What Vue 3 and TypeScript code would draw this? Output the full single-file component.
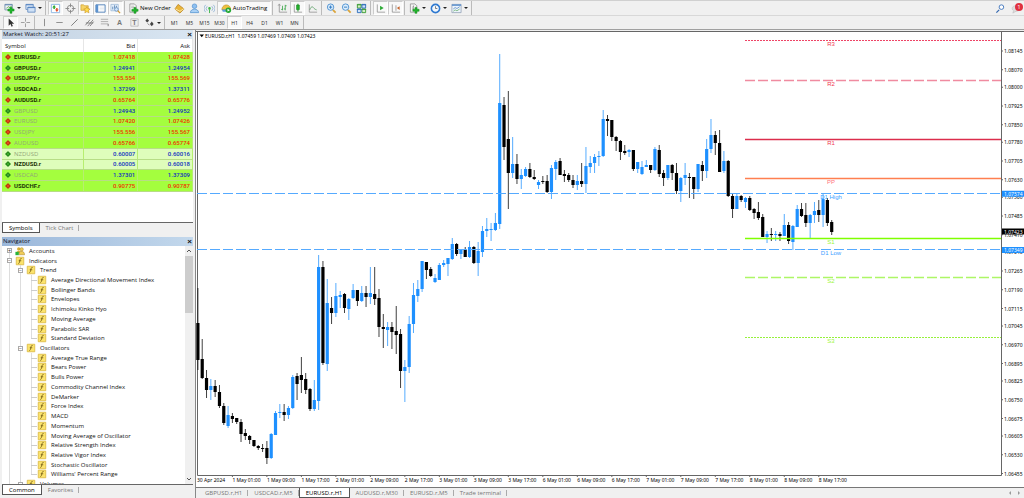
<script setup lang="ts">
import { ref } from 'vue'

interface Shape { d: string; f?: string; s?: string; w?: number }
interface Tool { icon?: string; label: string; text?: string; drop?: boolean; on?: boolean }
type Candle = [high: number, top: number, bottom: number, low: number, up: 0 | 1]

const icons: Record<string, Shape[]> = {
  newChart: [
    { d: 'M1 1.5h8v6H1z', f: '#eef4fa', s: '#7d95ad' }, { d: 'M1 2h8', s: '#5f86b3' },
    { d: 'M2.5 6l2-2 2 1 2-2', s: '#6aa84f' },
    { d: 'M6.5 4.5h2.2v2h2.3v2.3H8.7v2.4H6.5V8.8H4.2V6.5h2.3z', f: '#1fb52c', s: '#128a1d', w: 0.5 },
  ],
  profiles: [
    { d: 'M1 1.5h8v5.5H1z', f: '#e3eefb', s: '#6c93c4' }, { d: 'M1 2h8', s: '#4d7fc0' },
    { d: 'M3 4.5h8V10H3z', f: '#cfe1f6', s: '#6c93c4' }, { d: 'M3 5h8', s: '#4d7fc0' },
  ],
  watch: [
    { d: 'M1.5 1.5h9v9h-9z', f: '#fff', s: '#8bb6e2' },
    { d: 'M4.5 2.2L6.5 5H5.3v1.5H3.7V5H2.5z', f: '#2ea82f' },
    { d: 'M7.5 9.8L5.5 7h1.2V5.5h1.6V7h1.2z', f: '#e2502a' },
  ],
  target: [
    { d: 'M6 2.5a3.5 3.5 0 1 1 0 7a3.5 3.5 0 1 1 0-7z', s: '#888' },
    { d: 'M6 0.5v4M6 7.5v4M0.5 6h4M7.5 6h4', s: '#888' },
  ],
  navigator: [
    { d: 'M1 2h3l1 1h4v5H1z', f: '#f6d365', s: '#c99a2c', w: 0.7 },
    { d: 'M7.5 4l1.1 2.2 2.4.3-1.7 1.7.4 2.5-2.2-1.2-2.2 1.2.4-2.5L4 6.5l2.4-.3z', f: '#ffdb4d', s: '#c78d17', w: 0.6 },
  ],
  terminal: [
    { d: 'M1 2h10v8H1z', f: '#fff', s: '#4d7fb8' }, { d: 'M1 2h2.5v8H1z', f: '#5c92cf' },
    { d: 'M5 4.5h5M5 6h5M5 7.5h5', s: '#d3dce6', w: 0.6 },
  ],
  tester: [
    { d: 'M1 1.5h8v7H1z', f: '#e4eefa', s: '#8badd0', w: 0.7 }, { d: 'M3 7V4M5 6V2.5M7 5V3', s: '#5c87b7' },
    { d: 'M7 5a2 2 0 1 1 0 4a2 2 0 1 1 0-4z', f: '#d2e7fb', s: '#5b87bb', w: 0.8 }, { d: 'M8.5 8.5l2.5 2.5', s: '#d49a32', w: 1.4 },
  ],
  order: [
    { d: 'M2 1h5l2 2v7H2z', f: '#f6f6f6', s: '#888', w: 0.8 }, { d: 'M3.5 3.5h3M3.5 5h4', s: '#999', w: 0.6 },
    { d: 'M6.5 4.8h2.2v2H11V9H8.7v2.3H6.5V9H4.2V6.8h2.3z', f: '#21b32c', s: '#118a1b', w: 0.5 },
  ],
  gold: [{ d: 'M4.5 1.5l6.5 5-4.5 4.5L1 6.5z', f: '#e9b43a', s: '#b77d16', w: 0.8 }, { d: 'M1.5 6.5l5 2.5L11 6', s: '#fff0b5', w: 0.9 }],
  person: [
    { d: 'M6 1a2.3 2.3 0 1 1 0 5a2.3 2.3 0 1 1 0-5z', f: '#8fc0f0', s: '#4e8fce', w: 0.7 },
    { d: 'M1.5 10.5c0-5 9-5 9 0z', f: '#a9d0f5', s: '#4e8fce', w: 0.8 },
  ],
  signal: [
    { d: 'M6 4.5a1.4 1.4 0 1 1 0 2.8a1.4 1.4 0 1 1 0-2.8z', f: '#3fb44a' }, { d: 'M6 7v4', s: '#3fb44a' },
    { d: 'M3.5 3.5a3.5 3.5 0 0 0 0 5M8.5 3.5a3.5 3.5 0 0 1 0 5M1.8 2a6 6 0 0 0 0 8M10.2 2a6 6 0 0 1 0 8', s: '#7fa9d1', w: 0.8 },
  ],
  auto: [
    { d: 'M1 7.5c0-7 9-7 9.5-1z', f: '#eec23f', s: '#b88a1d', w: 0.7 }, { d: 'M1 7h8v2.5H2z', f: '#5d9ed8' },
    { d: 'M8 4.8a3 3 0 1 1 0 6a3 3 0 1 1 0-6z', f: '#24a832' }, { d: 'M7.1 6.3l2.5 1.5-2.5 1.5z', f: '#fff' },
  ],
  bars: [
    { d: 'M2.5 1.5V10H11', s: '#888', w: 0.8 }, { d: 'M1.2 3l1.3-2 1.3 2', s: '#888', w: 0.7 },
    { d: 'M6 3v5M6 7H4.5M9 2v6M9 3h1.5M9 6.5H7.5', s: '#3da64a', w: 0.9 },
  ],
  candles: [{ d: 'M2.5 1.5V10H11', s: '#888', w: 0.8 }, { d: 'M6.5 0.8v8.5', s: '#188c22' }, { d: 'M5 2.2h3v5H5z', f: '#24b12c', s: '#188c22', w: 0.7 }],
  line: [{ d: 'M2.5 1.5V10H11', s: '#888', w: 0.8 }, { d: 'M3 7.5C4 4 6 3.5 7 5s2 2 3.5 2.5', s: '#5a9e63', w: 0.9 }],
  zoomIn: [
    { d: 'M7.5 7.5l3 3', s: '#dba53c', w: 2 }, { d: 'M5 1a3.5 3.5 0 1 1 0 7a3.5 3.5 0 1 1 0-7z', f: '#dceefd', s: '#4b8fd0' },
    { d: 'M3.2 4.5h3.6M5 2.7v3.6', s: '#2e77c0' },
  ],
  zoomOut: [
    { d: 'M7.5 7.5l3 3', s: '#dba53c', w: 2 }, { d: 'M5 1a3.5 3.5 0 1 1 0 7a3.5 3.5 0 1 1 0-7z', f: '#dceefd', s: '#4b8fd0' },
    { d: 'M3.2 4.5h3.6', s: '#2e77c0' },
  ],
  tiles: [
    { d: 'M1.5 1.5h4v4h-4zM6.5 6.5h4v4h-4z', f: '#d5edc9', s: '#3c9c34' }, { d: 'M6.5 1.5h4v4h-4zM1.5 6.5h4v4h-4z', f: '#cfe2f8', s: '#2f6fba' },
    { d: 'M1 2h5M6 7h5', s: '#3c9c34' }, { d: 'M6 2h5M1 7h5', s: '#2f6fba' },
  ],
  scroll: [{ d: 'M2.5 1.5V10H11', s: '#888', w: 0.8 }, { d: 'M5.5 3l4 2.5-4 2.5z', f: '#2caa36' }],
  shift: [{ d: 'M2.5 1.5V10H11M6.5 2.5v6', s: '#888', w: 0.8 }, { d: 'M10.5 3.5L7.5 5.5l3 2z', f: '#c4632c' }],
  indicators: [
    { d: 'M1.5 1h5l2 2v7h-7z', f: '#f5f5f5', s: '#888', w: 0.8 }, { d: 'M5.5 3c-1 0-1 1-1 4', s: '#555', w: 0.8 },
    { d: 'M6.5 4.8h2.2v2H11V9H8.7v2.3H6.5V9H4.2V6.8h2.3z', f: '#21b32c', s: '#118a1b', w: 0.5 },
  ],
  clock: [{ d: 'M6 1.5a4.5 4.5 0 1 1 0 9a4.5 4.5 0 1 1 0-9z', f: '#f2f8fe', s: '#2f79d0', w: 1.7 }, { d: 'M6 3.5V6h2', s: '#555', w: 0.8 }],
  template: [
    { d: 'M1 1.5h10v9H1z', f: '#edf4fb', s: '#8a9bb0', w: 0.8 }, { d: 'M1 2.3h10', s: '#5b8fcd', w: 1.6 },
    { d: 'M2.5 6.5l2-1.5 2 1 3-2', s: '#4c80bd', w: 0.8 }, { d: 'M2.5 9l2-1.5 2 1 3-2', s: '#62a864', w: 0.8 },
  ],
  cursor: [{ d: 'M4 1.5v8l2-1.8 1.2 2.8 1.4-.6-1.2-2.6H10z', f: '#333' }],
  cross: [{ d: 'M6 1v4M6 7v4M1 6h4M7 6h4', s: '#999' }],
  vline: [{ d: 'M6 2v8', s: '#888' }],
  hline: [{ d: 'M2.5 6h7', s: '#888' }],
  trend: [{ d: 'M2.5 9.5l7-7', s: '#777' }],
  channel: [{ d: 'M1.5 9l5-6M4 10l6-7M6.5 10l4-5M2 6.5h8', s: '#666', w: 0.8 }],
  fibo: [{ d: 'M2 2.5h8M2 5h8M2 7.5h8', s: '#999', w: 0.8 }, { d: 'M10 7.5V10', s: '#777' }],
  frame: [{ d: 'M2 2h8v8H2z', s: '#aaa', w: 0.7 }],
  arrows: [{ d: 'M3.5 1.5l2 2.5-2 2-2-2zM8.5 5l2 2.5-2 2.5-2-2.5z', f: '#444' }, { d: 'M4 7l2 2', s: '#777' }],
  search: [{ d: 'M4.5 7.5l-3 3', s: '#3468b0', w: 1.4 }, { d: 'M7 2a2.5 2.5 0 1 1 0 5a2.5 2.5 0 1 1 0-5z', f: '#fff', s: '#3d73bb' }],
  bubble: [{ d: 'M5.5 3c6 0 6 6 0 6L2 11l.8-2.5C0 6.5 1 3 5.5 3z', f: '#ddd', s: '#bbb', w: 0.6 }],
  fx: [{ d: 'M1.5 1.5h9v9h-9z', f: '#fbe36c', s: '#dcb944' }, { d: 'M8 3c-2 0-2 1-2.3 3S5 9 4 9M4.5 5.7h3', s: '#6b5510', w: 0.9 }],
  accounts: [
    { d: 'M4.5 1.5a2 2 0 1 1 0 4a2 2 0 1 1 0-4zM1.5 9c0-4.5 6-4.5 6 0z', f: '#d8ae35' },
    { d: 'M8 2a2 2 0 1 1 0 4a2 2 0 1 1 0-4zM4.5 10.5c0-5.5 7-5.5 7 0z', f: '#f0cc58', s: '#a98221', w: 0.6 },
    { d: 'M0.5 7h4v4h-4z', f: '#27b43a' },
  ],
}

const standard: Tool[][] = [
  [{ icon: 'newChart', label: 'New chart', drop: true }, { icon: 'profiles', label: 'Profiles', drop: true }],
  [
    { icon: 'watch', label: 'Market Watch', on: true }, { icon: 'target', label: 'Data Window' },
    { icon: 'navigator', label: 'Navigator', on: true }, { icon: 'terminal', label: 'Terminal', on: true },
    { icon: 'tester', label: 'Strategy Tester', on: true },
  ],
  [
    { icon: 'order', label: 'New Order', text: 'New Order' }, { icon: 'gold', label: 'MetaEditor' },
    { icon: 'person', label: 'Community' }, { icon: 'signal', label: 'Signals' },
    { icon: 'auto', label: 'AutoTrading', text: 'AutoTrading', on: true },
  ],
  [{ icon: 'bars', label: 'Bar chart' }, { icon: 'candles', label: 'Candlesticks', on: true }, { icon: 'line', label: 'Line chart' }],
  [{ icon: 'zoomIn', label: 'Zoom in' }, { icon: 'zoomOut', label: 'Zoom out' }, { icon: 'tiles', label: 'Tile windows' }],
  [{ icon: 'scroll', label: 'Auto scroll', on: true }, { icon: 'shift', label: 'Chart shift', on: true }],
  [
    { icon: 'indicators', label: 'Indicators', drop: true }, { icon: 'clock', label: 'Periods', drop: true },
    { icon: 'template', label: 'Templates', drop: true },
  ],
]
const drawing: Tool[][] = [
  [{ icon: 'cursor', label: 'Cursor', on: true }, { icon: 'cross', label: 'Crosshair' }],
  [
    { icon: 'vline', label: 'Vertical line' }, { icon: 'hline', label: 'Horizontal line' }, { icon: 'trend', label: 'Trendline' },
    { icon: 'channel', label: 'Channel' }, { icon: 'fibo', label: 'Fibonacci' }, { label: 'Text', text: 'A' },
    { icon: 'frame', label: 'Text label', text: 'T' }, { icon: 'arrows', label: 'Arrows', drop: true },
  ],
]
const periods = ['M1', 'M5', 'M15', 'M30', 'H1', 'H4', 'D1', 'W1', 'MN']
const period = ref('H1')

interface Quote { s: string; bid: string; ask: string; up: boolean; off?: boolean; pale?: boolean }
const quotes: Quote[] = [
  { s: 'EURUSD.r', bid: '1.07418', ask: '1.07428', up: false },
  { s: 'GBPUSD.r', bid: '1.24941', ask: '1.24954', up: true },
  { s: 'USDJPY.r', bid: '155.554', ask: '155.569', up: false },
  { s: 'USDCAD.r', bid: '1.37299', ask: '1.37311', up: true },
  { s: 'AUDUSD.r', bid: '0.65764', ask: '0.65776', up: false },
  { s: 'GBPUSD', bid: '1.24943', ask: '1.24952', up: true, off: true },
  { s: 'EURUSD', bid: '1.07420', ask: '1.07426', up: false, off: true },
  { s: 'USDJPY', bid: '155.556', ask: '155.567', up: false, off: true },
  { s: 'AUDUSD', bid: '0.65766', ask: '0.65774', up: false, off: true },
  { s: 'NZDUSD', bid: '0.60007', ask: '0.60016', up: true, off: true, pale: true },
  { s: 'NZDUSD.r', bid: '0.60005', ask: '0.60018', up: true, pale: true },
  { s: 'USDCAD', bid: '1.37301', ask: '1.37309', up: true, off: true },
  { s: 'USDCHF.r', bid: '0.90775', ask: '0.90787', up: false },
]

interface Node { t: string; lvl: number; sign?: string; last?: boolean }
const leaves = (names: string[]): Node[] => names.map((t, i) => ({ t, lvl: 2, last: i === names.length - 1 }))
const tree: Node[] = [
  { t: 'Accounts', lvl: 0, sign: '+' },
  { t: 'Indicators', lvl: 0, sign: '−' },
  { t: 'Trend', lvl: 1, sign: '−' },
  ...leaves(['Average Directional Movement Index', 'Bollinger Bands', 'Envelopes', 'Ichimoku Kinko Hyo', 'Moving Average', 'Parabolic SAR', 'Standard Deviation']),
  { t: 'Oscillators', lvl: 1, sign: '−' },
  ...leaves(['Average True Range', 'Bears Power', 'Bulls Power', 'Commodity Channel Index', 'DeMarker', 'Force Index', 'MACD', 'Momentum',
    'Moving Average of Oscillator', 'Relative Strength Index', 'Relative Vigor Index', 'Stochastic Oscillator', "Williams' Percent Range"]),
  { t: 'Volumes', lvl: 1, sign: '−' },
]

const chartTabs = ['GBPUSD.r,H1', 'USDCAD.r,M5', 'EURUSD.r,H1', 'AUDUSD.r,M30', 'EURUSD.r,M5', 'Trade terminal']
const chartTab = ref('EURUSD.r,H1')

// Plot units: one unit is four points of price, one hour is 4.3116 units wide.
const yOf = (price: number) => 20 + (1.08145 - price) / 0.00004
const xOf = (hour: number) => 1.9 + hour * 4.3116
const plotRight = 805
const plotBottom = 444

const candles: Candle[] = [
  [288, 323, 360, 370, 0], [339, 359, 378, 379, 0], [370, 378, 390, 398, 0], [379, 386, 390, 400, 1], [380, 386, 392, 397, 0],
  [385, 392, 406, 408, 0], [403, 406, 423, 425, 0], [406, 415, 426, 428, 1], [413, 416, 419, 423, 0], [418, 418, 422, 424, 0],
  [419, 422, 434, 442, 0], [429, 433, 436, 440, 0], [435, 436, 440, 444, 0], [440, 440, 446, 447, 0], [445, 446, 448, 450, 0],
  [444, 448, 449, 452, 0], [441, 448, 458, 464, 0], [433, 434, 458, 459, 1], [411, 413, 435, 435, 1], [404, 412, 413, 418, 1],
  [404, 412, 415, 421, 0], [406, 408, 415, 419, 1], [375, 377, 408, 409, 1], [373, 376, 384, 400, 0], [357, 375, 380, 393, 0],
  [373, 379, 390, 394, 0], [388, 389, 409, 411, 0], [380, 400, 409, 411, 1], [255, 267, 401, 410, 1], [261, 267, 363, 365, 0],
  [279, 303, 364, 371, 1], [297, 308, 313, 324, 0], [283, 296, 313, 317, 1], [291, 295, 297, 308, 1], [293, 294, 308, 313, 0],
  [298, 299, 309, 320, 1], [284, 290, 298, 299, 1], [290, 290, 301, 306, 0], [286, 293, 301, 302, 1], [286, 293, 297, 307, 0],
  [267, 293, 297, 304, 1], [267, 294, 299, 305, 0], [289, 298, 327, 337, 0], [314, 327, 329, 348, 0], [322, 327, 330, 346, 1],
  [322, 327, 332, 349, 0], [306, 331, 335, 354, 0], [329, 334, 371, 388, 0], [360, 367, 371, 402, 1], [316, 324, 367, 373, 1],
  [283, 295, 324, 333, 1], [280, 289, 296, 302, 1], [261, 261, 289, 292, 1], [262, 262, 270, 279, 0], [267, 269, 276, 277, 0],
  [274, 278, 282, 283, 1], [263, 265, 280, 280, 1], [260, 263, 265, 267, 1], [258, 258, 264, 276, 1], [238, 244, 259, 260, 1],
  [243, 244, 254, 256, 0], [249, 250, 254, 259, 1], [247, 250, 257, 257, 0], [241, 247, 257, 258, 1], [246, 247, 263, 264, 0],
  [242, 251, 263, 276, 1], [226, 231, 252, 257, 1], [218, 229, 231, 237, 1], [223, 229, 230, 241, 1], [213, 223, 230, 231, 1],
  [54, 103, 224, 229, 1], [97, 105, 147, 160, 0], [91, 139, 173, 209, 0], [137, 164, 173, 178, 1], [154, 164, 179, 184, 0],
  [169, 175, 179, 189, 1], [167, 169, 176, 177, 1], [163, 169, 177, 178, 0], [170, 177, 179, 180, 0], [180, 182, 185, 189, 1],
  [176, 181, 182, 184, 0], [175, 181, 192, 193, 0], [165, 168, 192, 199, 1], [160, 162, 169, 180, 1], [158, 161, 175, 175, 0],
  [170, 174, 176, 182, 0], [173, 175, 180, 182, 0], [175, 180, 185, 188, 0], [175, 181, 185, 190, 1], [163, 181, 184, 187, 0],
  [147, 166, 184, 193, 1], [156, 163, 167, 173, 1], [154, 157, 163, 173, 1], [151, 156, 157, 166, 1], [110, 119, 156, 157, 1],
  [115, 119, 121, 136, 0], [120, 120, 137, 141, 0], [136, 137, 141, 151, 0], [140, 141, 152, 160, 0], [145, 151, 153, 155, 0],
  [149, 150, 152, 157, 1], [150, 150, 169, 171, 0], [162, 162, 169, 173, 1], [161, 167, 174, 175, 1], [160, 165, 167, 167, 1],
  [165, 165, 170, 173, 0], [147, 149, 170, 171, 1], [145, 150, 174, 177, 0], [170, 173, 178, 186, 0], [165, 165, 178, 180, 1],
  [164, 165, 173, 180, 0], [163, 173, 191, 194, 0], [177, 178, 191, 202, 1], [163, 175, 178, 185, 1], [173, 177, 178, 198, 0],
  [177, 177, 189, 199, 0], [164, 164, 189, 192, 1], [161, 165, 171, 181, 0], [139, 149, 171, 178, 1], [119, 135, 149, 153, 1],
  [131, 135, 143, 155, 0], [130, 143, 172, 172, 0], [151, 161, 171, 173, 1], [160, 161, 196, 197, 0], [194, 196, 209, 218, 0],
  [194, 196, 209, 209, 1], [195, 196, 200, 202, 0], [197, 198, 202, 208, 1], [196, 198, 210, 211, 0], [208, 209, 213, 219, 0],
  [202, 212, 218, 220, 0], [214, 217, 237, 237, 0], [231, 234, 237, 243, 1], [228, 234, 235, 241, 0], [231, 234, 235, 241, 1],
  [232, 234, 236, 241, 0], [214, 225, 236, 236, 1], [222, 225, 241, 244, 0], [225, 226, 242, 250, 1], [205, 209, 227, 227, 1],
  [203, 209, 216, 217, 0], [203, 215, 223, 227, 0], [214, 215, 223, 238, 1], [202, 211, 215, 223, 1], [200, 210, 215, 222, 0],
  [194, 199, 215, 227, 1], [198, 200, 223, 226, 0], [220, 222, 232, 235, 0],
]

const axisPrices = [1.08145, 1.0807, 1.08, 1.07925, 1.0785, 1.0778, 1.07705, 1.0763, 1.0756, 1.07485, 1.0741, 1.0734, 1.07265,
  1.0719, 1.07115, 1.07045, 1.0697, 1.06895, 1.06825, 1.0675, 1.06675, 1.06605, 1.0653, 1.06455]
const tags = [{ p: 1.07574, c: '#1e90ff' }, { p: 1.07423, c: '#000000' }, { p: 1.07349, c: '#1e90ff' }]
const levels = [
  { t: 'R3', p: 1.08186, c: '#ee4466', dash: '2 1', w: 1, x: 549 },
  { t: 'R2', p: 1.08029, c: '#f08ba0', dash: '10 3', w: 1.4, x: 549 },
  { t: 'R1', p: 1.07792, c: '#dc2d4c', dash: '', w: 1.4, x: 549 },
  { t: 'PP', p: 1.07636, c: '#ff7f50', dash: '', w: 1.4, x: 549 },
  { t: 'D1 High', p: 1.07574, c: '#55aaff', dash: '10 3', w: 1.2, x: 1 },
  { t: 'S1', p: 1.07395, c: '#7fff00', dash: '', w: 1.4, x: 549 },
  { t: 'D1 Low', p: 1.07349, c: '#55aaff', dash: '10 3', w: 1.2, x: 1 },
  { t: 'S2', p: 1.07239, c: '#adf666', dash: '10 3', w: 1.4, x: 549 },
  { t: 'S3', p: 1.06999, c: '#96f03c', dash: '2 1', w: 1, x: 549 },
]
const labelColor = (t: string) => (t[0] === 'D' ? '#3b9eff' : t[0] === 'S' ? '#9cf53a' : t === 'PP' ? '#ff6f7c' : '#f0384f')
const days = [1, 2, 3, 6, 7, 8]
const times = days.flatMap((d) => ['01', '09', '17'].map((h) => `${d} May ${h}:00`))
</script>

<template>
  <div class="terminal">
    <header class="toolbars">
      <div class="bar">
        <div v-for="(group, g) in standard" :key="g" class="group">
          <button v-for="t in group" :key="t.label" type="button" class="tool" :class="{ on: t.on, drop: t.drop, wide: t.text }" :aria-label="t.label">
            <svg v-if="t.icon" class="icon" viewBox="0 0 12 12"><path v-for="(s, i) in icons[t.icon]" :key="i" :d="s.d" :fill="s.f || 'none'" :stroke="s.s" :stroke-width="s.w || 1" /></svg>
            <span v-if="t.text">{{ t.text }}</span>
            <i v-if="t.drop" class="caret"></i>
          </button>
        </div>
        <div class="corner">
          <button type="button" class="tool" aria-label="Search">
            <svg class="icon" viewBox="0 0 12 12"><path v-for="(s, i) in icons.search" :key="i" :d="s.d" :fill="s.f || 'none'" :stroke="s.s" :stroke-width="s.w || 1" /></svg>
          </button>
          <button type="button" class="tool alerts" aria-label="Notifications">
            <svg class="icon" viewBox="0 0 12 12"><path v-for="(s, i) in icons.bubble" :key="i" :d="s.d" :fill="s.f || 'none'" :stroke="s.s" :stroke-width="s.w || 1" /></svg>
            <span class="badge">1</span>
          </button>
        </div>
      </div>
      <div class="bar second">
        <div v-for="(group, g) in drawing" :key="g" class="group">
          <button v-for="t in group" :key="t.label" type="button" class="tool" :class="{ on: t.on, drop: t.drop }" :aria-label="t.label">
            <svg v-if="t.icon" class="icon" viewBox="0 0 12 12"><path v-for="(s, i) in icons[t.icon]" :key="i" :d="s.d" :fill="s.f || 'none'" :stroke="s.s" :stroke-width="s.w || 1" /></svg>
            <span v-if="t.text" class="letter" :class="{ over: t.icon }">{{ t.text }}</span>
            <i v-if="t.drop" class="caret"></i>
          </button>
        </div>
        <div class="group">
          <button v-for="p in periods" :key="p" type="button" class="tool period" :class="{ on: p === period }" @click="period = p">{{ p }}</button>
        </div>
      </div>
    </header>

    <main class="body">
      <aside class="side">
        <section class="panel watch">
          <h2 class="title pale">Market Watch: 20:51:27<button type="button" class="close" aria-label="Close Market Watch">×</button></h2>
          <div class="sheet">
            <table class="quotes">
              <thead><tr><th scope="col">Symbol</th><th scope="col">Bid</th><th scope="col">Ask</th></tr></thead>
              <tbody>
                <tr v-for="q in quotes" :key="q.s" :class="{ up: q.up, off: q.off, faded: q.pale }">
                  <td><i class="gem"></i>{{ q.s }}</td><td>{{ q.bid }}</td><td>{{ q.ask }}</td>
                </tr>
              </tbody>
            </table>
          </div>
          <nav class="tabs"><button type="button" class="tab active">Symbols</button><button type="button" class="tab">Tick Chart</button></nav>
        </section>

        <section class="panel nav">
          <h2 class="title">Navigator<button type="button" class="close" aria-label="Close Navigator">×</button></h2>
          <div class="sheet tree-box">
            <ul class="tree">
              <li v-for="(n, i) in tree" :key="i" class="node">
                <i v-for="k in n.lvl" :key="k" class="guide line"></i>
                <i v-if="n.sign" class="guide line" :class="{ first: i === 0 }"><b class="sign">{{ n.sign }}</b></i>
                <i v-if="n.lvl === 2" class="guide line leafline" :class="{ last: n.last }"></i>
                <svg class="icon small" viewBox="0 0 12 12"><path v-for="(s, j) in icons[i === 0 ? 'accounts' : 'fx']" :key="j" :d="s.d" :fill="s.f || 'none'" :stroke="s.s" :stroke-width="s.w || 1" /></svg>
                <span>{{ n.t }}</span>
              </li>
            </ul>
            <div class="scroll">
              <svg viewBox="0 0 8 10"><path d="M2 6l2-2 2 2" /></svg>
              <i class="thumb"></i>
              <svg viewBox="0 0 8 10"><path d="M2 4l2 2 2-2" /></svg>
            </div>
          </div>
          <nav class="tabs"><button type="button" class="tab active">Common</button><button type="button" class="tab">Favorites</button></nav>
        </section>
      </aside>

      <section class="chart">
        <svg class="plot" viewBox="0 0 828 456" role="img" aria-label="EURUSD.r, H1 candlestick chart">
          <path d="M0 0.5H828M1.5 0V444.5H805.5V0.5" class="frame" />
          <path d="M3.5 3.5h4.5l-2.25 2.7z" />
          <text x="9" y="7" class="axis">EURUSD.r,H1&#160; 1.07459 1.07469 1.07409 1.07423</text>

          <g v-for="(c, i) in candles" :key="i" :class="c[4] ? 'bull' : 'bear'">
            <rect :x="xOf(i) - 0.5" :y="c[0] - 31" width="1" :height="c[3] - c[0]" class="wick" />
            <rect :x="xOf(i) - 1.6" :y="c[1] - 31" width="3.2" :height="Math.max(1, c[2] - c[1])" />
          </g>

          <g v-for="l in levels" :key="l.t">
            <line :x1="l.x" :x2="plotRight" :y1="Math.floor(yOf(l.p)) + 0.5" :y2="Math.floor(yOf(l.p)) + 0.5" :stroke="l.c" :stroke-width="l.w" :stroke-dasharray="l.dash" />
            <text x="635" :y="Math.floor(yOf(l.p)) + 6" text-anchor="middle" class="level" :fill="labelColor(l.t)">{{ l.t }}</text>
          </g>

          <g v-for="p in axisPrices" :key="p">
            <line x1="806" x2="807" :y1="yOf(p)" :y2="yOf(p)" class="frame" />
            <text x="808" :y="yOf(p) + 2" class="axis">{{ p.toFixed(5) }}</text>
          </g>
          <g v-for="t in tags" :key="t.p">
            <rect x="806" :y="yOf(t.p) - 3" width="22" height="6" :fill="t.c" />
            <text x="808" :y="yOf(t.p) + 2" class="axis tag">{{ t.p.toFixed(5) }}</text>
          </g>

          <text x="1" y="451" class="axis">30 Apr 2024</text>
          <g v-for="(t, i) in times" :key="t">
            <line :x1="xOf(8 * i + 8)" :x2="xOf(8 * i + 8)" :y1="plotBottom" :y2="plotBottom + 2" class="frame" />
            <text :x="xOf(8 * i + 8)" y="451" class="axis">{{ t }}</text>
          </g>
        </svg>
        <nav class="tabs chart-tabs">
          <button v-for="t in chartTabs" :key="t" type="button" class="tab" :class="{ active: t === chartTab }" @click="chartTab = t">{{ t }}</button>
          <span class="arrows"><i class="left"></i><i class="right"></i></span>
        </nav>
      </section>
    </main>
  </div>
</template>

<style>
body { margin: 0; background: #f0f0f0; }
</style>

<style scoped>
* { box-sizing: border-box; }
.terminal { display: flex; flex-direction: column; min-height: 100vh; background: #f0f0f0; color: #111; font-family: "Open Sans", "Noto Sans", sans-serif; font-size: 6px; line-height: 8px; }
button { font: inherit; color: inherit; margin: 0; padding: 0; border: 0; background: none; }
h2, ul { margin: 0; padding: 0; font-weight: 400; font-size: inherit; }

.toolbars { border-top: 1px solid #d0d0d0; border-bottom: 1px solid #a0a0a0; }
.bar { display: flex; height: 14px; padding-left: 2px; }
.second { padding-left: 3px; border-top: 1px solid #d8d8d8; }
.group { display: flex; padding-right: 1px; margin-right: 2px; border-right: 1px solid #bbb; }
.tool { position: relative; display: flex; align-items: center; justify-content: center; width: 15px; border: 1px solid transparent; }
.tool.on { border-color: #ccc #fff #fff #ccc; background: #f9f9f9; }
.tool.drop { width: 21px; gap: 2px; }
.tool.wide { width: auto; padding: 0; gap: 1px; color: #000; }
.tool.wide.on { padding: 0 3px; }
.icon { flex: none; width: 11px; height: 11px; }
.caret { border: 2px solid transparent; border-top-color: #222; border-bottom: 0; }
.letter { font: 700 7px "Liberation Sans", Arial, sans-serif; color: #777; }
.over { position: absolute; inset: 0; line-height: 12px; text-align: center; }
.period { font: 5px "Noto Sans", sans-serif; color: #333; }
.corner { display: flex; margin-left: auto; gap: 1px; }
.badge { position: absolute; right: 0; top: 1px; width: 8px; height: 8px; border-radius: 50%; background: #e0303f; color: #fff; }

.body { display: grid; grid-template-columns: 195px 1fr; flex: 1; }
.side { display: flex; flex-direction: column; gap: 3px; padding-left: 2px; padding-right: 2px; }
.title { display: flex; justify-content: space-between; height: 9px; padding: 0 1px; color: #112; background: linear-gradient(90deg, #9ab7da, #c3d8ec); }
.title.pale { background: linear-gradient(90deg, #c3d2e2, #d9e6f2); }
.close { font: 700 8px/8px "Liberation Sans", Arial, sans-serif; color: #111; }
.sheet { background: #fff; }
.watch .sheet { height: 183px; }
.watch { padding-bottom: 1px; }
.quotes { width: 100%; height: 153px; border-collapse: collapse; table-layout: fixed; }
.quotes th { height: 13px; font-weight: 400; text-align: right; padding: 0 2px; border-right: 1px solid #e6e6e6; }
.quotes th:first-child { width: 81px; text-align: left; padding-left: 3px; }
.quotes td { padding: 0 2px; text-align: right; font: 500 6px/8px Roboto, sans-serif; color: #f03000; background: #a4fe3e; border-bottom: 1px solid #b7dd86; border-right: 1px solid #b7ee70; }
.quotes .up td { color: #1030c0; }
.quotes .faded td { background: #defdbb; }
.quotes td:first-child, .quotes .up td:first-child { text-align: left; color: #1c3306; font-weight: 700; }
.quotes .off td:first-child, .quotes .up.off td:first-child { color: #93a67a; font: 6px/8px "Open Sans", sans-serif; }
.gem { display: inline-block; width: 4px; height: 4px; margin: 0 4px 0 2px; background: #e8481c; border: 1px solid #b5380f; transform: rotate(45deg); }
.up .gem { background: #3fae2c; border-color: #24801a; }

.tabs { display: flex; height: 11px; border-top: 1px solid #666; }
.tab { position: relative; padding: 0 6px; color: #777; }
.tab::after { content: ""; position: absolute; right: 0; top: 2px; height: 6px; border-right: 1px solid #aaa; }
.tab.active { background: #fff; color: #000; border: 1px solid #555; border-top: 0; }
.tab.active::after { display: none; }

.tree-box { display: flex; height: 238px; overflow: hidden; }
.tree { display: flex; flex-direction: column; flex: 1; height: 243px; padding-left: 2px; list-style: none; }
.node { display: flex; align-items: center; flex: 1 1 0; min-height: 0; white-space: nowrap; }
.guide { position: relative; flex: none; align-self: stretch; display: flex; align-items: center; justify-content: center; width: 11px; font-style: normal; }
.line::before { content: ""; position: absolute; left: 5px; top: 0; bottom: 0; border-left: 1px solid #ddd; }
.first::before { top: 50%; }
.last::before { bottom: 50%; }
.leafline::after { content: ""; position: absolute; left: 5px; right: 0; top: 50%; border-top: 1px solid #ccc; }
.sign { position: relative; width: 5px; height: 5px; border: 1px solid #aaa; background: #fff; font: 5px/3px "Liberation Sans", Arial, sans-serif; text-align: center; color: #333; }
.small { width: 10px; height: 10px; margin-right: 4px; }
.scroll { display: flex; flex-direction: column; width: 8px; background: #f0f0f0; }
.scroll svg { width: 8px; height: 10px; fill: none; stroke: #555; }
.thumb { height: 57px; background: #cdcdcd; margin-bottom: auto; }

.chart { display: flex; flex-direction: column; min-width: 0; border-left: 1px solid #888; }
.plot { display: block; width: 100%; margin-top: 1px; background: #fff; }
.frame { fill: none; stroke: #666; }
.bull { fill: #1e90ff; }
.bear { fill: #000; }
.wick { opacity: 0.75; }
.axis { font: 5px "Noto Sans", "Open Sans", sans-serif; fill: #000; }
.tag { fill: #fff; }
.level { font: 6px "Liberation Sans", Arial, sans-serif; }
.chart-tabs { padding-left: 3px; border-top-color: #777; }
.arrows { display: flex; gap: 7px; align-items: center; margin-left: auto; padding-right: 2px; }
.arrows i { border: 2px solid transparent; }
.arrows .left { border-right-color: #999; }
.arrows .right { border-left-color: #999; }
</style>
